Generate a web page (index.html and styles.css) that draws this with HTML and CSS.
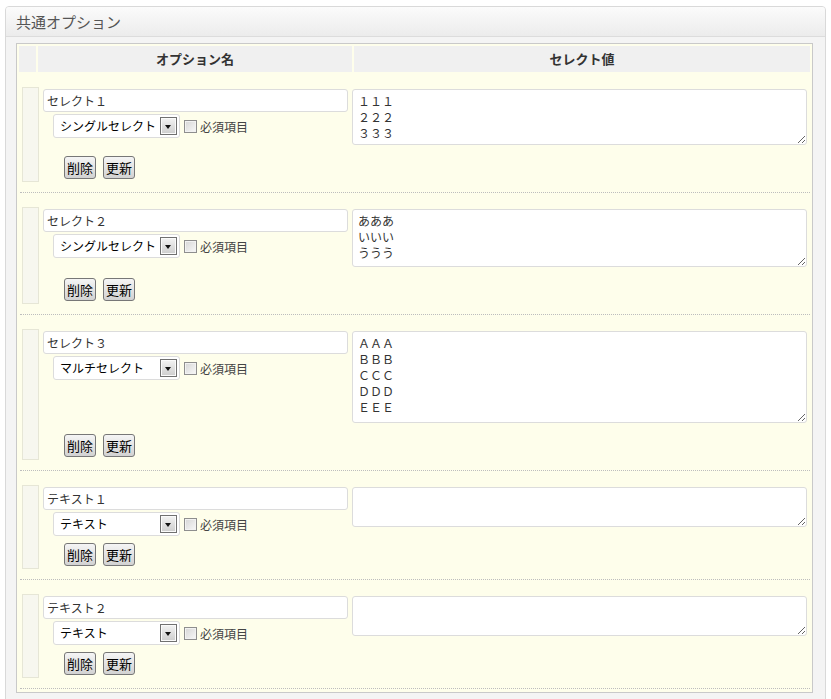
FILE: index.html
```html
<!DOCTYPE html>
<html lang="ja">
<head>
<meta charset="utf-8">
<title>共通オプション</title>
<link rel="stylesheet" href="styles.css">
</head>
<body>
<div class="panel">
  <div class="panel-head">共通オプション</div>
  <div class="panel-body">
    <div class="opt-table">
      <div class="thead">
        <div class="th"></div>
        <div class="th">オプション名</div>
        <div class="th">セレクト値</div>
      </div>

      <div class="row">
        <div class="handle"></div>
        <div class="name-cell">
          <input class="name" type="text" value="セレクト１">
          <div class="type-line">
            <div class="sel"><span class="sel-text">シングルセレクト</span><span class="sel-btn"></span></div>
            <label class="req"><input class="chk" type="checkbox">必須項目</label>
          </div>
        </div>
        <div class="value-cell"><textarea class="ta h56">１１１
２２２
３３３</textarea></div>
        <div class="btn-cell"><button class="btn">削除</button><button class="btn">更新</button></div>
      </div>

      <div class="row">
        <div class="handle"></div>
        <div class="name-cell">
          <input class="name" type="text" value="セレクト２">
          <div class="type-line">
            <div class="sel"><span class="sel-text">シングルセレクト</span><span class="sel-btn"></span></div>
            <label class="req"><input class="chk" type="checkbox">必須項目</label>
          </div>
        </div>
        <div class="value-cell"><textarea class="ta h58">あああ
いいい
ううう</textarea></div>
        <div class="btn-cell"><button class="btn">削除</button><button class="btn">更新</button></div>
      </div>

      <div class="row">
        <div class="handle"></div>
        <div class="name-cell">
          <input class="name" type="text" value="セレクト３">
          <div class="type-line">
            <div class="sel"><span class="sel-text">マルチセレクト</span><span class="sel-btn"></span></div>
            <label class="req"><input class="chk" type="checkbox">必須項目</label>
          </div>
        </div>
        <div class="value-cell"><textarea class="ta h92">ＡＡＡ
ＢＢＢ
ＣＣＣ
ＤＤＤ
ＥＥＥ</textarea></div>
        <div class="btn-cell"><button class="btn">削除</button><button class="btn">更新</button></div>
      </div>

      <div class="row">
        <div class="handle"></div>
        <div class="name-cell">
          <input class="name" type="text" value="テキスト１">
          <div class="type-line">
            <div class="sel"><span class="sel-text">テキスト</span><span class="sel-btn"></span></div>
            <label class="req"><input class="chk" type="checkbox">必須項目</label>
          </div>
        </div>
        <div class="value-cell"><textarea class="ta h40"></textarea></div>
        <div class="btn-cell"><button class="btn">削除</button><button class="btn">更新</button></div>
      </div>

      <div class="row">
        <div class="handle"></div>
        <div class="name-cell">
          <input class="name" type="text" value="テキスト２">
          <div class="type-line">
            <div class="sel"><span class="sel-text">テキスト</span><span class="sel-btn"></span></div>
            <label class="req"><input class="chk" type="checkbox">必須項目</label>
          </div>
        </div>
        <div class="value-cell"><textarea class="ta h40"></textarea></div>
        <div class="btn-cell"><button class="btn">削除</button><button class="btn">更新</button></div>
      </div>
    </div>
  </div>
</div>
</body>
</html>
```

FILE: styles.css
```css
* { box-sizing: border-box; }

html, body {
  margin: 0;
  padding: 0;
  background: #ffffff;
}

body {
  font-family: "Noto Sans CJK JP", "Noto Sans", sans-serif;
  font-size: 12px;
  color: #333;
}

.panel {
  margin: 6px 5px 0 5px;
  border: 1px solid #d9d9d9;
  border-radius: 4px 4px 0 0;
  background: #f4f4f4;
  padding-bottom: 10px;
}

.panel-head {
  height: 30px;
  line-height: 29px;
  padding-left: 10px;
  font-size: 15px;
  color: #555;
  background: linear-gradient(#fbfbfb, #ececec);
  border-bottom: 1px solid #dcdcdc;
  border-radius: 3px 3px 0 0;
}

.panel-body {
  padding: 6px 12px 0 10px;
}

.opt-table {
  border: 1px solid #c9c9c9;
  background: #fefeeb;
  padding-bottom: 3px;
}

.thead {
  display: grid;
  grid-template-columns: 17px 314px 1fr;
  column-gap: 2px;
  padding: 2px 2px 0 2px;
  margin-bottom: 1px;
}

.th {
  height: 26px;
  line-height: 26px;
  background: #f0f0f0;
  text-align: center;
  font-weight: bold;
  font-size: 13px;
  color: #333;
}

.row {
  display: grid;
  grid-template-columns: 17px 305px 455px;
  grid-template-rows: auto auto;
  column-gap: 4px;
  margin: 0 2px 0 3px;
  padding: 14px 0 10px 2px;
  border-bottom: 1px dotted #bdbdbd;
}

.handle {
  grid-column: 1;
  grid-row: 1 / 3;
  background: #f7f7ef;
  border: 1px solid #e6e6d6;
}

.name-cell {
  grid-column: 2;
  grid-row: 1;
  padding-top: 2px;
}

.value-cell {
  grid-column: 3;
  grid-row: 1;
  padding-top: 2px;
}

.btn-cell {
  grid-column: 2;
  grid-row: 2;
  padding: 7px 0 3px 21px;
  display: flex;
  gap: 7px;
}

.name {
  display: block;
  width: 305px;
  height: 23px;
  margin: 0 0 2px 0;
  padding: 0 3px;
  border: 1px solid #dcdcdc;
  border-radius: 3px;
  background: #fff;
  font-family: inherit;
  font-size: 12px;
  color: #333;
  outline: none;
}

.type-line {
  display: flex;
  align-items: center;
  padding-left: 10px;
  gap: 4px;
}

.sel {
  display: flex;
  align-items: center;
  justify-content: space-between;
  width: 127px;
  height: 24px;
  padding: 0 2px 0 6px;
  border: 1px solid #dcdcdc;
  border-radius: 3px;
  background: #fff;
  font-size: 12px;
  color: #000;
}

.sel-text {
  white-space: nowrap;
  line-height: 22px;
}

.sel-btn {
  position: relative;
  width: 17px;
  height: 18px;
  border: 1px solid #707070;
  background: linear-gradient(#f3f3f3, #cdcdcd);
  box-shadow: inset 0 0 0 1px #fafafa;
  flex: none;
}

.sel-btn::after {
  content: "";
  position: absolute;
  left: 4px;
  top: 7px;
  border-left: 3.5px solid transparent;
  border-right: 3.5px solid transparent;
  border-top: 4px solid #111;
}

.req {
  display: flex;
  align-items: center;
  gap: 3px;
  font-size: 12px;
  color: #444;
  white-space: nowrap;
}

.chk {
  appearance: none;
  -webkit-appearance: none;
  width: 13px;
  height: 13px;
  margin: 0;
  border: 1px solid #8e8e8e;
  background: linear-gradient(135deg, #d6d6d6, #f8f8f8);
  box-shadow: inset 0 0 0 1px #f2f2f2;
}

.ta {
  display: block;
  width: 455px;
  margin: 0 0 4px 0;
  padding: 3px 5px;
  border: 1px solid #dcdcdc;
  border-radius: 3px;
  background: #fff;
  font-family: inherit;
  font-size: 12px;
  line-height: 16px;
  color: #333;
  resize: vertical;
  outline: none;
  overflow: hidden;
}

.h56 { height: 56px; }
.h58 { height: 58px; }
.h92 { height: 92px; }
.h40 { height: 40px; }

.btn {
  width: 32px;
  height: 23px;
  padding: 0;
  border: 1px solid #777;
  border-radius: 3px;
  background: linear-gradient(#f5f5f5, #d2d2d2);
  font-family: inherit;
  font-size: 13px;
  line-height: 21px;
  color: #000;
}
```
